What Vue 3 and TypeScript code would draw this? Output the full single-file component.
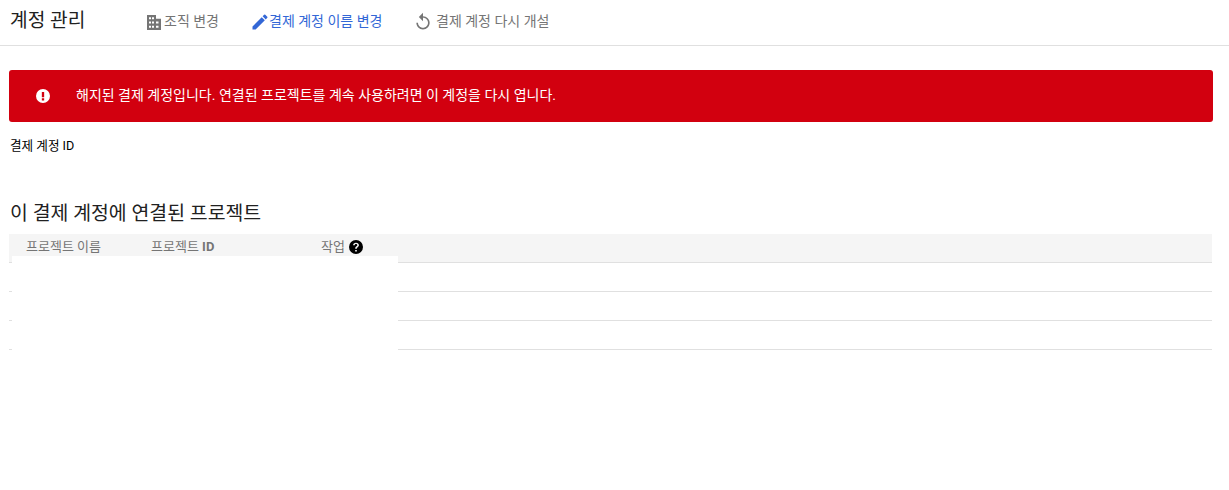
<script setup lang="ts">
const rows: number[] = [1, 2, 3]
</script>

<template>
  <div class="page">
    <header class="topbar">
      <h1 class="title">계정 관리</h1>
      <nav class="actions">
        <a class="action org">
          <svg viewBox="0 0 14 14" width="14" height="15" preserveAspectRatio="none"><path fill="#757575" fill-rule="evenodd" d="M0 0h9v3.500h5V14H0zM2 2v2h2V2zM5 2v2h2V2zM2 6v2h2V6zM5 6v2h2V6zM9 6v2h2.500V6zM2 10v2h2v-2zM5 10v2h2v-2zM9 10v2h2.500v-2z"/></svg>
          <span>조직 변경</span>
        </a>
        <a class="action rename">
          <svg viewBox="0 0 24 24" width="20" height="20"><path fill="#3367d6" d="M3 17.25V21h3.750L17.810 9.940l-3.750-3.750L3 17.250zM20.710 7.040a1 1 0 0 0 0-1.410l-2.340-2.340a1 1 0 0 0-1.410 0l-1.830 1.830 3.750 3.750 1.830-1.830z"/></svg>
          <span>결제 계정 이름 변경</span>
        </a>
        <a class="action reopen">
          <svg viewBox="0 0 24 24" width="20" height="20"><path fill="#757575" d="M12 5V1L7 6l5 5V7c3.310 0 6 2.690 6 6s-2.690 6-6 6-6-2.690-6-6H4c0 4.420 3.580 8 8 8s8-3.580 8-8-3.580-8-8-8z"/></svg>
          <span>결제 계정 다시 개설</span>
        </a>
      </nav>
    </header>

    <main class="content">
      <div class="banner">
        <svg class="banner-icon" viewBox="0 0 24 24" width="14" height="14"><path fill="#fff" fill-rule="evenodd" d="M12 0a12 12 0 1 0 0 24 12 12 0 0 0 0-24zM10 5h4v9h-4zM10 16h4v3.500h-4z"/></svg>
        <span class="banner-text">해지된 결제 계정입니다. 연결된 프로젝트를 계속 사용하려면 이 계정을 다시 엽니다.</span>
      </div>

      <div class="account-id">결제 계정 ID</div>

      <h2 class="section">이 결제 계정에 연결된 프로젝트</h2>

      <div class="table">
        <div class="thead">
          <span class="col-name">프로젝트 이름</span>
          <span class="col-id">프로젝트 <b>ID</b></span>
          <span class="col-act">
            작업
            <svg viewBox="0 0 24 24" width="14" height="14"><path fill="#000" fill-rule="evenodd" d="M12 0a12 12 0 1 0 0 24 12 12 0 0 0 0-24zM10.600 17h2.800v2.800h-2.800zM12 4.500c-2.900 0-5 1.900-5 4.500h2.800c0-1.100.9-2 2.200-2s2.200.8 2.200 1.800c0 1-.6 1.400-1.500 2.100-1.200.9-2.100 1.900-2.100 4.100h2.800c0-1.400.5-1.900 1.500-2.700 1.100-.9 2.100-1.900 2.100-3.600 0-2.500-2-4.200-5-4.200z"/></svg>
          </span>
        </div>
        <div v-for="r in rows" :key="r" class="trow"></div>
        <div class="mask"></div>
      </div>
    </main>
  </div>
</template>

<style>
html, body { margin: 0; background: #fff; }
</style>

<style scoped>
.page {
  width: 1229px;
  height: 490px;
  overflow: hidden;
  font-family: Roboto, "Noto Sans CJK KR", sans-serif;
  color: #000;
}
.topbar {
  display: flex;
  align-items: center;
  height: 45px;
  padding: 0 0 4px 10px;
  box-sizing: border-box;
  box-shadow: 0 1px 0 #e0e0e0;
}
.title {
  margin: 0;
  width: 137px;
  font-size: 19.200px;
  font-weight: 400;
  line-height: 40px;
  color: #212121;
}
.actions { display: flex; }
.action {
  display: flex;
  align-items: center;
  font-size: 14px;
  color: #757575;
}
.action svg { flex: none; margin-top: 3px; }
.action span { margin-bottom: 2px; }
.action.org { width: 103px; gap: 3px; }
.action.rename { width: 163px; color: #3367d6; }
.action.rename span { margin-left: -1px; }
.action.reopen svg { margin-right: 3px; }
.content { padding: 25px 17px 0 9px; }
.banner {
  display: flex;
  align-items: center;
  height: 52px;
  margin-right: -1px;
  background: #d2000f;
  border-radius: 3px;
  color: #fff;
  font-size: 14px;
}
.banner-icon { margin: 0 26px 0 27px; flex: none; }
.banner-text { margin-bottom: 4px; }
.account-id {
  margin-top: 15px;
  padding-left: 1px;
  height: 18px;
  line-height: 18px;
  font-size: 12.600px;
}
.section {
  margin: 46px 0 0;
  padding-left: 1px;
  font-size: 19.400px;
  font-weight: 400;
  line-height: 26px;
  height: 33px;
  color: #212121;
}
.table { position: relative; }
.thead {
  display: flex;
  align-items: center;
  height: 29px;
  padding: 0 0 6px;
  box-sizing: border-box;
  background: #f5f5f5;
  border-bottom: 1px solid #e0e0e0;
  font-size: 13px;
  font-weight: 400;
  color: #757575;
}
.col-name { width: 125px; margin-left: 17px; }
.col-id { width: 170px; }
.col-id b { font-weight: 700; }
.col-act { display: flex; align-items: center; gap: 4px; }
.col-act svg { margin-top: 3px; }
.trow { height: 28px; border-bottom: 1px solid #e0e0e0; }
.mask {
  position: absolute;
  left: 3px;
  top: 22px;
  width: 386px;
  height: 94px;
  background: #fff;
}
</style>
